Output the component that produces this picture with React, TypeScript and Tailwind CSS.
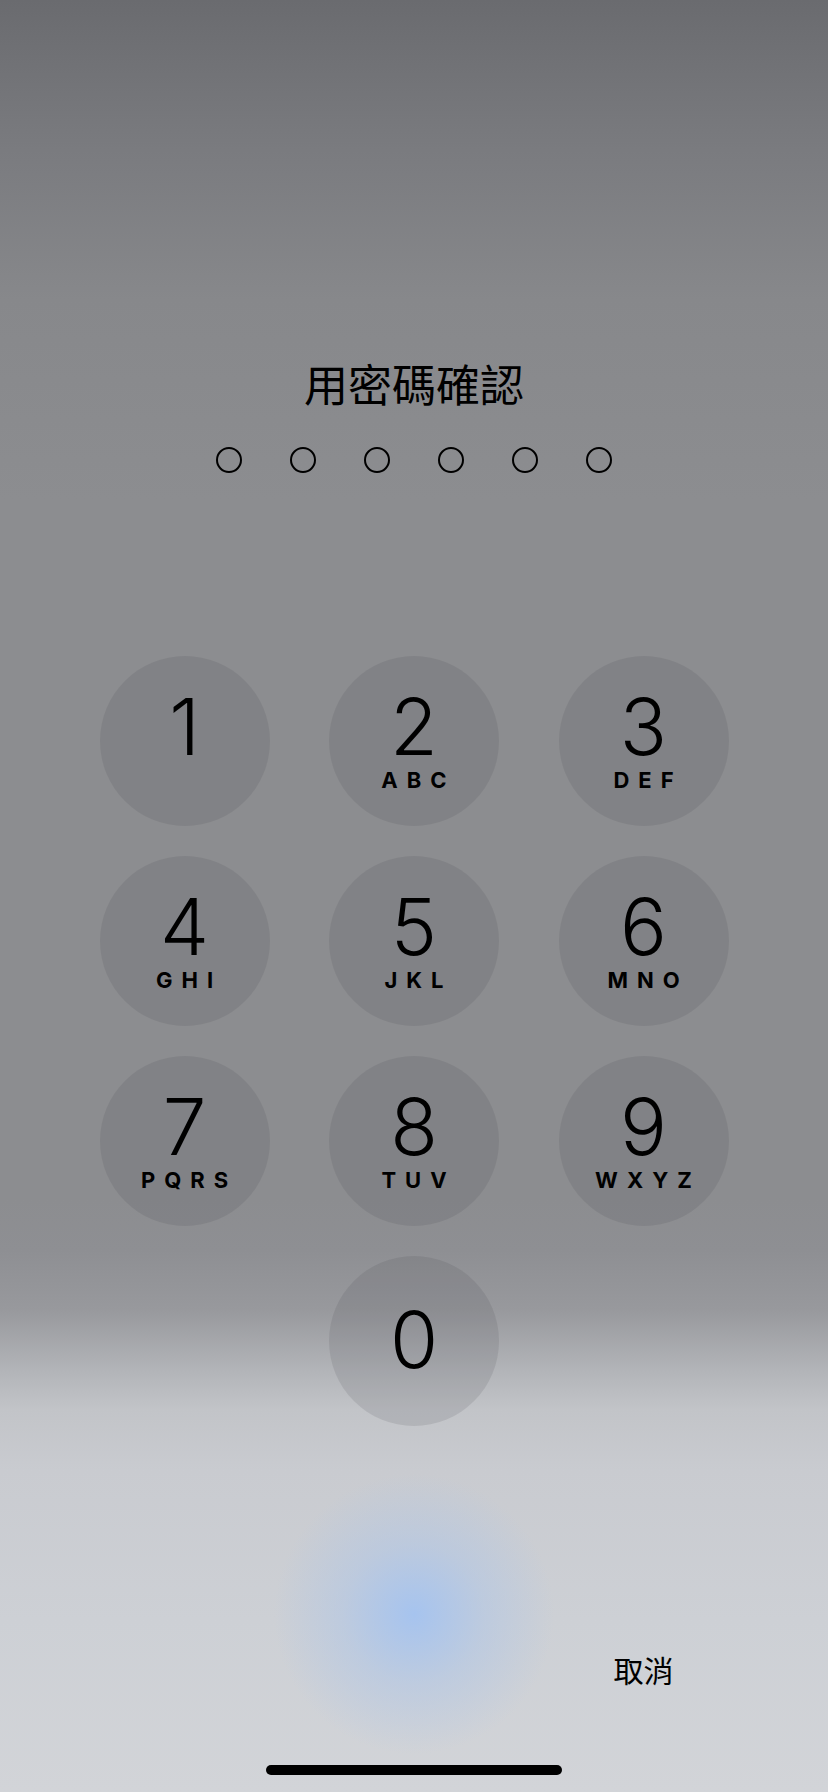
import React from "react";

const KEYS: { digit: string; letters: string }[] = [
  { digit: "1", letters: "" },
  { digit: "2", letters: "ABC" },
  { digit: "3", letters: "DEF" },
  { digit: "4", letters: "GHI" },
  { digit: "5", letters: "JKL" },
  { digit: "6", letters: "MNO" },
  { digit: "7", letters: "PQRS" },
  { digit: "8", letters: "TUV" },
  { digit: "9", letters: "WXYZ" },
];

const cjk = "font-['Noto_Sans_CJK_TC','Noto_Sans',sans-serif]";

const KeyButton = ({ digit, letters }: { digit: string; letters?: string }) => (
  <button
    type="button"
    className="flex h-[170px] w-[170px] flex-col items-center justify-center rounded-full bg-[#3c4048]/[0.13] pb-[3px] text-black"
  >
    <span className="font-['Inter','Liberation_Sans',sans-serif] text-[78px] font-light leading-none">{digit}</span>
    {letters !== undefined && (
      <span className="mt-[3px] h-[22px] pl-[9px] font-['Inter','Liberation_Sans',sans-serif] text-[22px] font-bold leading-none tracking-[9px]">
        {letters}
      </span>
    )}
  </button>
);

export default function App() {
  return (
    <div className="flex h-[1792px] w-full flex-col items-center overflow-hidden bg-[radial-gradient(140px_140px_at_414px_1614px,rgba(164,195,240,0.95),rgba(170,196,234,0.45)_50%,rgba(170,196,234,0)),linear-gradient(to_bottom,#6a6b6f_0px,#7a7b7f_150px,#87888b_300px,#8c8d90_500px,#8c8d90_1200px,#8e8f93_1250px,#98999d_1310px,#b2b4b8_1370px,#c2c4c8_1410px,#c9cbd0_1470px,#cdd0d5_1620px,#d2d4d8_1792px)] pt-[361px]">
      <h1 className={`${cjk} text-[44px] font-normal leading-none text-black`}>用密碼確認</h1>

      <div className="mt-[42px] flex gap-[48px]">
        {Array.from({ length: 6 }).map((_, i) => (
          <span key={i} className="h-[26px] w-[26px] rounded-full border-[2px] border-black" />
        ))}
      </div>

      <div className="mt-[183px] grid grid-cols-[170px_170px_170px] gap-x-[59.5px] gap-y-[30px]">
        {KEYS.map((k) => (
          <KeyButton key={k.digit} digit={k.digit} letters={k.letters} />
        ))}
        <div />
        <KeyButton digit="0" />
        <div />
      </div>

      <div className="mt-[228px] grid grid-cols-[170px_170px_170px] gap-x-[59.5px]">
        <div />
        <div />
        <button type="button" className={`${cjk} text-center text-[30px] leading-none text-black`}>
          取消
        </button>
      </div>

      <div className="mt-[81px] h-[10px] w-[296px] rounded-full bg-black" />
    </div>
  );
}
